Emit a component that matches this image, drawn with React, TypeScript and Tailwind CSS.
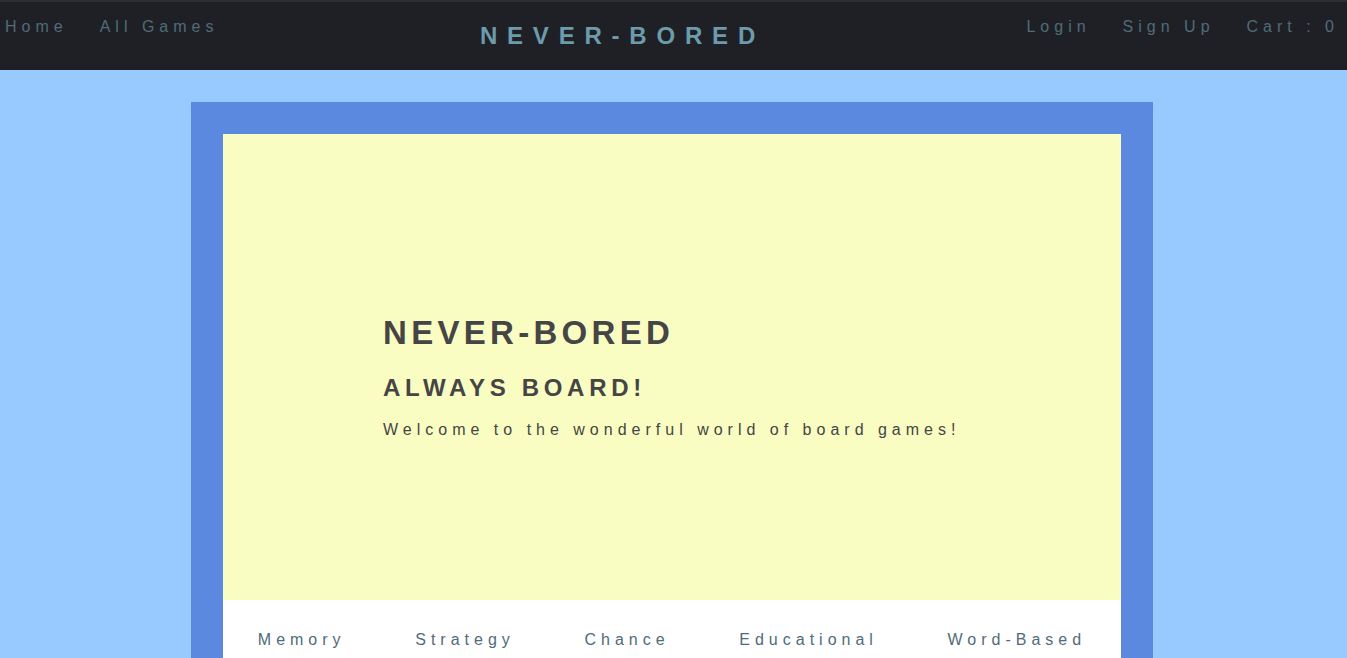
import React from "react";

export default function App() {
  const cats = ["Memory", "Strategy", "Chance", "Educational", "Word-Based"];
  return (
    <div
      className="h-[658px] overflow-hidden bg-[#99caff]"
      style={{ fontFamily: '"Liberation Sans", Arial, Helvetica, sans-serif' }}
    >
      <header className="flex h-[70px] items-start justify-between border-t-2 border-[#2d2e32] bg-[#1f2025] pl-[5px] pr-[8px]">
        <nav className="flex gap-[32px] pt-[16px] text-[16px] leading-[18px] tracking-[5px] text-[#4f6c79]">
          <span>Home</span>
          <span>All Games</span>
        </nav>
        <div className="self-center text-[24px] font-bold leading-[28px] tracking-[9.8px] text-[#6c9bab]">
          NEVER-BORED
        </div>
        <nav className="flex gap-[32px] pt-[16px] text-[16px] leading-[18px] tracking-[5px] text-[#4f6c79]">
          <span>Login</span>
          <span>Sign Up</span>
          <span>Cart : 0</span>
        </nav>
      </header>

      <main className="ml-[191px] mt-[32px] w-[962px] border-[32px] border-b-0 border-[#5b89e0] bg-white">
        <section className="h-[466px] bg-[#f9fdc2] pl-[160px] pt-[179px] text-[#454545]">
          <h1 className="text-[33px] font-bold leading-[40px] tracking-[4.3px]">NEVER-BORED</h1>
          <h2 className="mt-[20px] text-[24px] font-bold leading-[30px] tracking-[4.7px]">ALWAYS BOARD!</h2>
          <p className="mt-[15px] text-[16px] leading-[24px] tracking-[5px]">
            Welcome to the wonderful world of board games!
          </p>
        </section>
        <section className="flex h-[120px] justify-around pt-[31px] text-[16px] leading-[18px] tracking-[5px] text-[#4f6c79]">
          {cats.map((c) => (
            <span key={c}>{c}</span>
          ))}
        </section>
      </main>
    </div>
  );
}
